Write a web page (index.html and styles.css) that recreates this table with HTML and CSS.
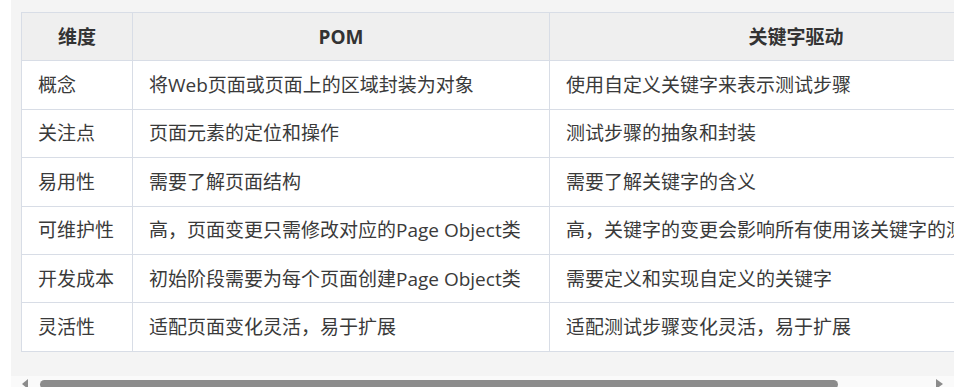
FILE: index.html
```html
<!DOCTYPE html>
<html lang="zh-CN">
<head>
<meta charset="utf-8">
<title>POM vs 关键字驱动</title>
<link rel="stylesheet" href="styles.css">
</head>
<body>
<div class="frame">
  <div class="scroller">
    <table class="cmp">
      <colgroup>
        <col class="c1">
        <col class="c2">
        <col class="c3">
      </colgroup>
      <thead>
        <tr><th>维度</th><th>POM</th><th>关键字驱动</th></tr>
      </thead>
      <tbody>
        <tr><td>概念</td><td>将Web页面或页面上的区域封装为对象</td><td>使用自定义关键字来表示测试步骤</td></tr>
        <tr><td>关注点</td><td>页面元素的定位和操作</td><td>测试步骤的抽象和封装</td></tr>
        <tr><td>易用性</td><td>需要了解页面结构</td><td>需要了解关键字的含义</td></tr>
        <tr><td>可维护性</td><td>高，页面变更只需修改对应的Page Object类</td><td>高，关键字的变更会影响所有使用该关键字的测试用例</td></tr>
        <tr><td>开发成本</td><td>初始阶段需要为每个页面创建Page Object类</td><td>需要定义和实现自定义的关键字</td></tr>
        <tr><td>灵活性</td><td>适配页面变化灵活，易于扩展</td><td>适配测试步骤变化灵活，易于扩展</td></tr>
      </tbody>
    </table>
  </div>
  <div class="hscroll">
    <span class="arrow arrow-left"></span>
    <span class="thumb"></span>
    <span class="arrow arrow-right"></span>
  </div>
</div>
</body>
</html>
```
FILE: styles.css
```css
html, body {
  margin: 0;
  padding: 0;
  background: #ffffff;
}

body {
  font-family: "Open Sans", "Noto Sans CJK SC", "Noto Sans", sans-serif;
  color: #3a3a3a;
}

.frame {
  margin-left: 11px;
  width: 943px;
}

.scroller {
  background: #f4f4f4;
  padding: 12px 0 24px 10px;
  overflow: hidden;
}

.cmp {
  border-collapse: collapse;
  table-layout: fixed;
  width: 1021px;
  font-size: 19px;
  line-height: 26px;
  background: #ffffff;
}

.cmp .c1 { width: 111px; }
.cmp .c2 { width: 417px; }
.cmp .c3 { width: 493px; }

.cmp th,
.cmp td {
  border: 1px solid #d8dde6;
  padding: 10.7px 16px;
  white-space: nowrap;
  overflow: hidden;
}

.cmp th {
  background: #efefef;
  font-weight: 700;
  text-align: center;
  color: #333333;
}

.cmp td {
  text-align: left;
}

.hscroll {
  display: flex;
  align-items: flex-start;
  height: 17px;
  background: #fafafa;
}

.arrow {
  width: 0;
  height: 0;
  margin-top: 3px;
  border-top: 5px solid transparent;
  border-bottom: 5px solid transparent;
}

.arrow-left {
  margin-left: 11px;
  border-right: 6px solid #8c8c8c;
}

.arrow-right {
  margin-left: auto;
  margin-right: 11px;
  border-left: 7px solid #8c8c8c;
}

.thumb {
  margin-left: 12px;
  margin-top: 4px;
  width: 798px;
  height: 9px;
  border-radius: 5px;
  background: #8c8c8c;
}
```
